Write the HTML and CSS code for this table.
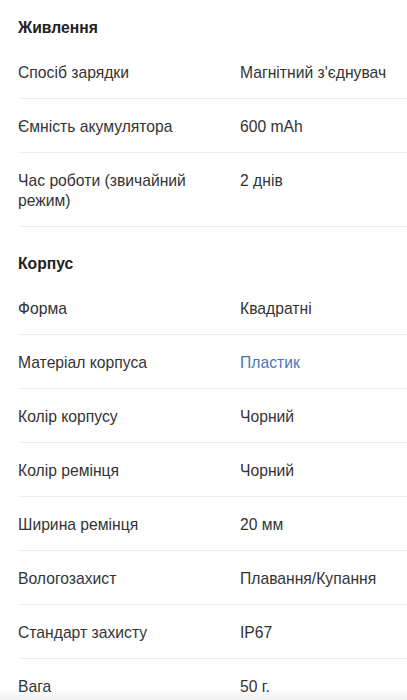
FILE: index.html
```html
<!DOCTYPE html>
<html lang="uk">

<head>
    <meta charset="UTF-8">
    <meta name="viewport" content="width=device-width, initial-scale=1.0">
    <title>Характеристики</title>
    <link rel="stylesheet" href="styles.css">
</head>

<body>

    <div class="specs">

        <h2 class="group">Живлення</h2>
        <div class="row">
            <div class="name">Спосіб зарядки</div>
            <div class="val">Магнітний з'єднувач</div>
        </div>
        <div class="row">
            <div class="name">Ємність акумулятора</div>
            <div class="val">600 mAh</div>
        </div>
        <div class="row">
            <div class="name">Час роботи (звичайний режим)</div>
            <div class="val">2 днів</div>
        </div>

        <h2 class="group">Корпус</h2>
        <div class="row">
            <div class="name">Форма</div>
            <div class="val">Квадратні</div>
        </div>
        <div class="row">
            <div class="name">Матеріал корпуса</div>
            <div class="val"><a href="#">Пластик</a></div>
        </div>
        <div class="row">
            <div class="name">Колір корпусу</div>
            <div class="val">Чорний</div>
        </div>
        <div class="row">
            <div class="name">Колір ремінця</div>
            <div class="val">Чорний</div>
        </div>
        <div class="row">
            <div class="name">Ширина ремінця</div>
            <div class="val">20 мм</div>
        </div>
        <div class="row">
            <div class="name">Вологозахист</div>
            <div class="val">Плавання/Купання</div>
        </div>
        <div class="row">
            <div class="name">Стандарт захисту</div>
            <div class="val">IP67</div>
        </div>
        <div class="row">
            <div class="name">Вага</div>
            <div class="val">50 г.</div>
        </div>

    </div>

    <div class="bottom-shade"></div>

</body>

</html>
```

FILE: styles.css
```css
body {
    margin: 0;
    background: #fff;
    font-family: "Liberation Sans", Arial, Helvetica, sans-serif;
    color: #333;
    font-size: 15.7px;
    line-height: 20px;
}

.specs {
    padding-left: 18px;
}

.group {
    margin: 0;
    padding: 18px 0 7px;
    font-size: 15.7px;
    line-height: 20px;
    font-weight: bold;
    color: #222;
}

.row + .group {
    padding-top: 27px;
}

.row {
    display: flex;
    padding: 18px 0 15px;
    border-bottom: 1px solid #eeeeee;
}

.row:last-child {
    border-bottom: 0;
}

.name {
    width: 222px;
    padding-right: 16px;
    box-sizing: border-box;
}

.val {
    flex: 1;
}

.val a {
    color: #4a74b4;
    text-decoration: none;
}

.bottom-shade {
    position: fixed;
    left: 0;
    right: 0;
    bottom: 0;
    height: 12px;
    background: linear-gradient(to bottom, rgba(0, 0, 0, 0), rgba(0, 0, 0, 0.06));
}
```
